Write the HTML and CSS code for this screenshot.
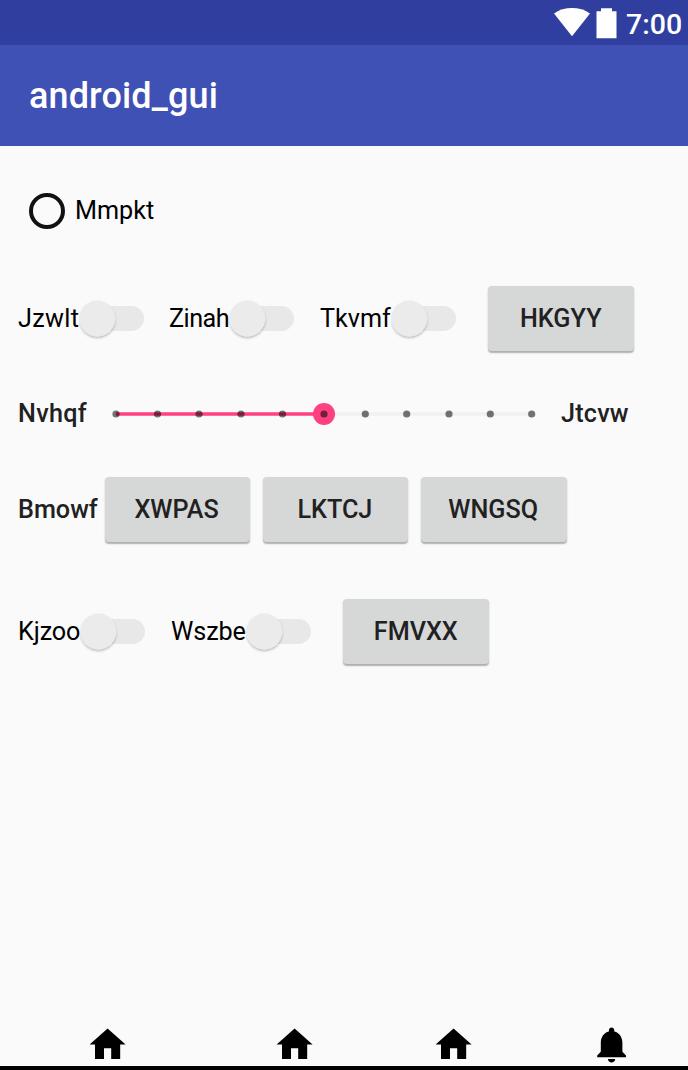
FILE: index.html
```html
<!DOCTYPE html>
<html lang="en">
<head>
<meta charset="utf-8">
<title>android_gui</title>
<link rel="stylesheet" href="styles.css">
</head>
<body>
<svg class="defs" width="0" height="0">
  <defs>
    <filter id="shadow" x="-20%" y="-20%" width="140%" height="150%">
      <feDropShadow dx="0" dy="1.5" stdDeviation="1" flood-color="#000" flood-opacity=".28"/>
    </filter>
    <symbol id="switch" viewBox="0 0 66 44">
      <rect x="6" y="9" width="59" height="25" rx="12.5" fill="#e8e8e8"/>
      <circle cx="18.4" cy="21.5" r="17.9" fill="#ebebeb" filter="url(#shadow)"/>
    </symbol>
    <symbol id="home" viewBox="0 0 24 24"><path d="M10 20v-6h4v6h5v-8h3L12 3 2 12h3v8z"/></symbol>
    <symbol id="bell" viewBox="0 0 24 24"><path d="M12 22c1.1 0 2-.9 2-2h-4c0 1.1.89 2 2 2zm6-6v-5c0-3.07-1.64-5.64-4.5-6.32V4c0-.83-.67-1.5-1.5-1.5s-1.5.67-1.5 1.5v.68C7.63 5.36 6 7.92 6 11v5l-2 2v1h16v-1l-2-2z"/></symbol>
  </defs>
</svg>
<header class="status">
  <svg class="wifi" width="36" height="29" viewBox="0 0 36 29"><path d="M0 5.5C10.500-1.800 25.500-1.800 36 5.500L18 28.200z" fill="#fff"/></svg>
  <svg class="battery" width="21" height="31" viewBox="0 0 21 31"><path d="M.5 3.300H5V.3H16V3.300H20.500V30.200H.5z" fill="#fff"/></svg>
  <span class="clock">7:00</span>
</header>
<div class="appbar"><h1 class="title">android_gui</h1></div>
<main class="content">
  <label class="radio"><span class="ring"></span><span>Mmpkt</span></label>
  <div class="row row-toggles">
    <div class="toggle t1"><span>Jzwlt</span><svg class="switch"><use href="#switch"/></svg></div>
    <div class="toggle t2"><span>Zinah</span><svg class="switch"><use href="#switch"/></svg></div>
    <div class="toggle t3"><span>Tkvmf</span><svg class="switch"><use href="#switch"/></svg></div>
    <button class="btn">HKGYY</button>
  </div>
  <div class="row row-slider">
    <span class="strong slider-label">Nvhqf</span>
    <svg class="slider" width="424" height="24" viewBox="0 0 424 24">
      <path d="M212 12H420" stroke="#f1f1f1" stroke-width="3.600"/>
      <path d="M4 12H212" stroke="#ff4081" stroke-width="3.600"/>
      <circle cx="212" cy="12" r="11" fill="#ff4081"/>
      <g fill="#000" fill-opacity=".54">
        <circle cx="4" cy="12" r="3.600"/><circle cx="45.500" cy="12" r="3.600"/><circle cx="87" cy="12" r="3.600"/><circle cx="129" cy="12" r="3.600"/><circle cx="170.500" cy="12" r="3.600"/><circle cx="212" cy="12" r="3.600"/><circle cx="253.300" cy="12" r="3.600"/><circle cx="294.700" cy="12" r="3.600"/><circle cx="337" cy="12" r="3.600"/><circle cx="378.300" cy="12" r="3.600"/><circle cx="419.700" cy="12" r="3.600"/>
      </g>
    </svg>
    <span class="strong">Jtcvw</span>
  </div>
  <div class="row row-buttons">
    <span class="strong buttons-label">Bmowf</span>
    <div class="group"><button class="btn">XWPAS</button><button class="btn">LKTCJ</button><button class="btn">WNGSQ</button></div>
  </div>
  <div class="row row-last">
    <div class="toggle t4"><span>Kjzoo</span><svg class="switch"><use href="#switch"/></svg></div>
    <div class="toggle t5"><span>Wszbe</span><svg class="switch"><use href="#switch"/></svg></div>
    <button class="btn">FMVXX</button>
  </div>
</main>
<nav class="nav">
  <svg class="icon"><use href="#home"/></svg>
  <svg class="icon"><use href="#home"/></svg>
  <svg class="icon"><use href="#home"/></svg>
  <svg class="icon"><use href="#bell"/></svg>
</nav>
</body>
</html>
```
FILE: styles.css
```css
* { box-sizing: border-box; }
body {
  margin: 0;
  width: 688px;
  height: 1070px;
  overflow: hidden;
  display: flex;
  flex-direction: column;
  background: #fafafa;
  color: #000;
  font: 400 25.2px/30px Roboto, sans-serif;
}
svg { display: block; flex: none; }
.defs { position: absolute; }
.status {
  height: 45px;
  flex: none;
  display: flex;
  align-items: flex-start;
  padding: 8px 6px 0 554px;
  background: #303f9f;
  color: #fff;
}
.battery { margin-left: 6px; }
.clock { margin: 1px 0 0 9px; font-size: 28.5px; line-height: 32px; font-weight: 500; white-space: nowrap; }
.appbar {
  height: 100.5px;
  flex: none;
  display: flex;
  align-items: center;
  padding: 2px 0 0 29px;
  background: #3f51b5;
  color: #fff;
}
.title { margin: 0; font-size: 36px; line-height: 42px; font-weight: 500; letter-spacing: .12px; }
.content { flex: 1; padding: 46.5px 0 0 18px; }
.radio { display: flex; align-items: center; height: 38px; padding-left: 11px; gap: 10px; }
.ring { width: 36px; height: 36px; border: 4px solid #111; border-radius: 50%; }
.row { display: flex; align-items: center; height: 66px; }
.row-toggles { margin-top: 55.5px; }
.toggle { display: flex; align-items: center; justify-content: space-between; }
.switch { width: 66px; height: 44px; }
.t1 { width: 127px; margin-right: 24px; letter-spacing: .3px; }
.t2 { width: 126px; margin-right: 25px; letter-spacing: -.5px; }
.t3 { width: 137px; margin-right: 31px; }
.t4 { width: 128px; margin-right: 25px; letter-spacing: -.1px; }
.t5 { width: 141px; margin-right: 31px; letter-spacing: -.1px; }
.btn {
  width: 145.5px;
  height: 65px;
  flex: none;
  border: 0;
  border-radius: 4px;
  padding: 0;
  background: #d6d7d7;
  color: #212121;
  font: 500 25.2px/30px Roboto, sans-serif;
  box-shadow: 0 1.5px 1.5px rgba(0, 0, 0, .3);
}
.strong { font-weight: 500; color: #212121; }
.row-slider { height: 40px; margin-top: 42.5px; }
.slider-label { width: 94px; letter-spacing: .3px; }
.slider { margin-right: 25px; }
.slider + .strong { letter-spacing: .2px; }
.row-buttons { margin-top: 42.4px; }
.row-buttons .btn { padding: 2px 1.5px 0 0; }
.buttons-label { width: 86.6px; padding-top: 2px; }
.group { display: flex; gap: 12.8px; }
.row-last { margin-top: 56.5px; }
.nav {
  height: 52.5px;
  flex: none;
  display: flex;
  padding: 5px 0 0 86.4px;
  border-bottom: 4.5px solid #000;
}
.icon { width: 43.2px; height: 43.2px; margin-right: 115.2px; }
.icon:first-child { margin-right: 143.8px; }
.icon:last-child { margin-right: 0; }
```
